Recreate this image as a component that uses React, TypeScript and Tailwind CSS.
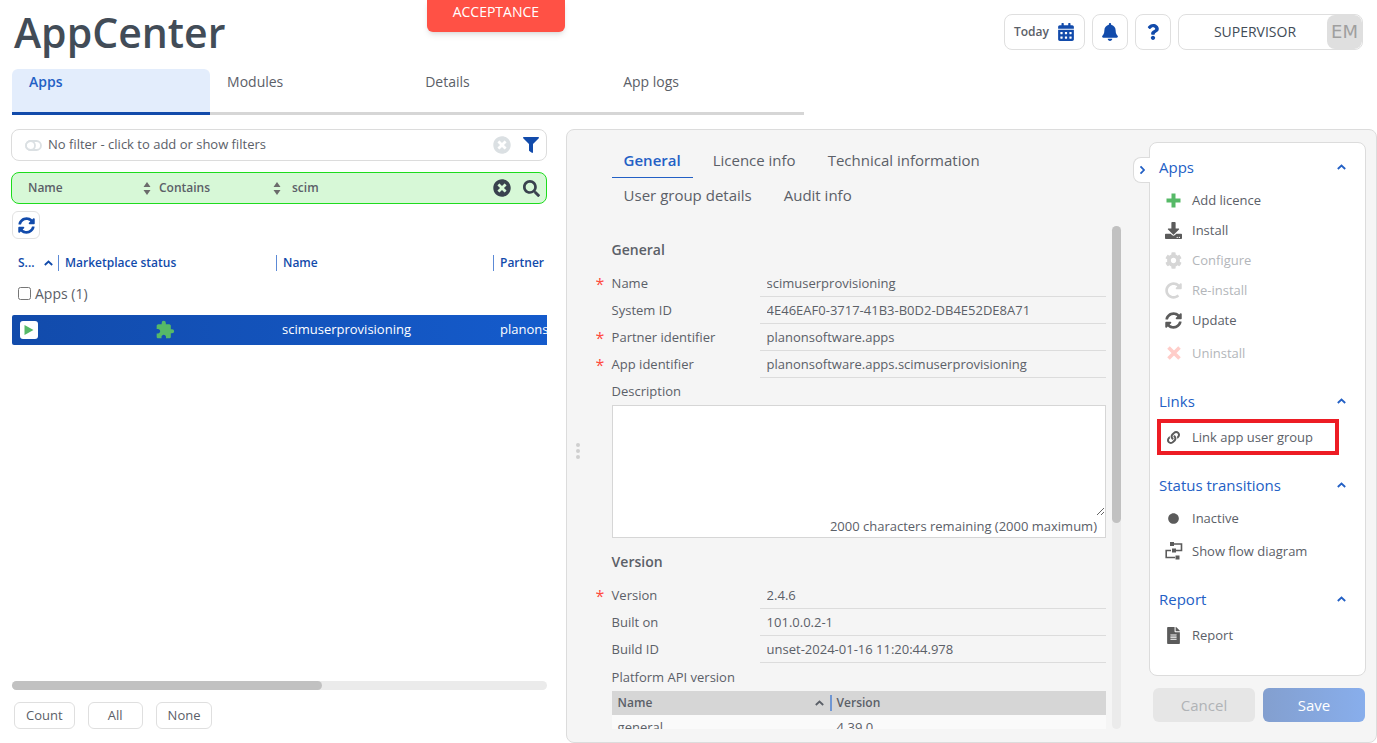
import React from 'react';
import clsx from 'clsx';
import type { IconType } from 'react-icons';
import {
    FaBell,
    FaCalendarAlt,
    FaCircle,
    FaCog,
    FaDownload,
    FaFileAlt,
    FaFilter,
    FaLink,
    FaQuestion,
    FaRedoAlt,
    FaSearch,
    FaSyncAlt,
    FaTimesCircle,
} from 'react-icons/fa';
import { MdExtension } from 'react-icons/md';

interface ActionItem {
    label: string;
    icon: React.ReactNode;
    disabled?: boolean;
    highlighted?: boolean;
}

interface ActionGroup {
    title: string;
    items: ActionItem[];
}

interface Field {
    id: string;
    label: string;
    value: string;
    required?: boolean;
}

const mainTabs = ['Apps', 'Modules', 'Details', 'App logs'];
const detailTabs = ['General', 'Licence info', 'Technical information', 'User group details', 'Audit info'];

const generalFields: Field[] = [
    { id: 'name', label: 'Name', value: 'scimuserprovisioning', required: true },
    { id: 'system-id', label: 'System ID', value: '4E46EAF0-3717-41B3-B0D2-DB4E52DE8A71' },
    { id: 'partner', label: 'Partner identifier', value: 'planonsoftware.apps', required: true },
    { id: 'app', label: 'App identifier', value: 'planonsoftware.apps.scimuserprovisioning', required: true },
];

const versionFields: Field[] = [
    { id: 'version', label: 'Version', value: '2.4.6', required: true },
    { id: 'built-on', label: 'Built on', value: '101.0.0.2-1' },
    { id: 'build-id', label: 'Build ID', value: 'unset-2024-01-16 11:20:44.978' },
];

function FlowIcon() {
    return (
        <svg width="18" height="18" viewBox="0 0 18 18" fill="none" stroke="#5b5b5b" strokeWidth="1.6">
            <path d="M9 2H16.5V8.5H11M6 8.5H1.2V15.5H10" />
            <path fill="#5b5b5b" stroke="none" d="M5 0h4v4H5zM7 6.5h4v4H7zM10.5 13.5h4v4h-4z" />
        </svg>
    );
}

function PlusIcon() {
    return (
        <svg width="15" height="15" viewBox="0 0 15 15" fill="none" stroke="#56b967" strokeWidth="4" strokeLinejoin="round">
            <path d="M7.5 .5v14M.5 7.5h14" />
        </svg>
    );
}

function CrossIcon() {
    return (
        <svg width="14" height="14" viewBox="0 0 14 14" fill="none" stroke="#ffcdc9" strokeWidth="3.6">
            <path d="M1.5 1.5l11 11M12.5 1.5l-11 11" />
        </svg>
    );
}

function Chevron({ className }: { className?: string }) {
    return (
        <svg width="9" height="6" viewBox="0 0 9 6" fill="none" stroke="currentColor" strokeWidth="1.8" className={className}>
            <path d="M.8 5 4.5 1.5 8.2 5" />
        </svg>
    );
}

function icon(Icon: IconType, size: number, className = 'text-[#5b5b5b]') {
    return <Icon size={size} className={className} />;
}

const actionGroups: ActionGroup[] = [
    {
        title: 'Apps',
        items: [
            { label: 'Add licence', icon: <PlusIcon /> },
            { label: 'Install', icon: icon(FaDownload, 17) },
            { label: 'Configure', icon: icon(FaCog, 17, 'text-[#d6d6d6]'), disabled: true },
            { label: 'Re-install', icon: icon(FaRedoAlt, 17, 'text-[#d6d6d6]'), disabled: true },
            { label: 'Update', icon: icon(FaSyncAlt, 17) },
            { label: 'Uninstall', icon: <CrossIcon />, disabled: true },
        ],
    },
    { title: 'Links', items: [{ label: 'Link app user group', icon: icon(FaLink, 13), highlighted: true }] },
    {
        title: 'Status transitions',
        items: [
            { label: 'Inactive', icon: icon(FaCircle, 11) },
            { label: 'Show flow diagram', icon: <FlowIcon /> },
        ],
    },
    { title: 'Report', items: [{ label: 'Report', icon: icon(FaFileAlt, 17) }] },
];

function FieldRow({ field }: { field: Field }) {
    return (
        <div className="flex h-[27px] items-center">
            <span className="w-4 text-base leading-4 text-[#ff4b3e]">{field.required && '*'}</span>
            <label htmlFor={field.id} className="w-[148px] shrink-0">{field.label}</label>
            <input
                id={field.id}
                readOnly
                defaultValue={field.value}
                className="h-full min-w-0 flex-1 border-b border-[#dcdcdc] bg-transparent px-[7px] outline-none"
            />
        </div>
    );
}

function SortSelect({ label, value, className }: { label: string; value: string; className: string }) {
    return (
        <div className={clsx('relative flex items-center', className)}>
            <select aria-label={label} defaultValue={value} className="w-full appearance-none bg-transparent outline-none">
                <option>{value}</option>
            </select>
            <svg width="8" height="13" viewBox="0 0 8 13" fill="#6b6b6b" className="pointer-events-none absolute right-0">
                <path d="M4 0 7.5 5H.5zM4 13 .5 8h7z" />
            </svg>
        </div>
    );
}

function Header() {
    const button = 'flex h-9 items-center justify-center rounded-lg border border-[#dfdfdf] text-[#124bab]';
    return (
        <header className="flex h-[69px] items-start justify-between pr-[14px]">
            <h1 className="pl-[3px] text-[41px] leading-[64px] font-semibold text-[#424c57]">AppCenter</h1>
            <div className="flex gap-[7px] pt-[14px]">
                <button className={clsx(button, 'w-[81px] gap-2')}>
                    <span className="text-xs font-semibold text-[#5b6068]">Today</span>
                    <FaCalendarAlt size={18} />
                </button>
                <button aria-label="Notifications" className={clsx(button, 'w-9')}><FaBell size={18} /></button>
                <button aria-label="Help" className={clsx(button, 'w-9')}><FaQuestion size={16} /></button>
                <button className={clsx(button, 'w-[185px] overflow-hidden')}>
                    <span className="flex-1 pl-1 text-sm text-[#424c57]">SUPERVISOR</span>
                    <span className="flex h-full w-[35px] items-center justify-center rounded-lg bg-[#dfdfdf] font-['DejaVu_Sans',sans-serif] text-lg text-[#9f9f9f]">EM</span>
                </button>
            </div>
        </header>
    );
}

function AppList() {
    const headText = 'flex h-4 items-center border-l border-[#5c8ad6] pl-[6px]';
    const footButton = 'h-[27px] rounded-md border border-[#dfdfdf] px-[11px] text-[13px]';
    return (
        <section className="flex min-h-0 min-w-0 flex-col">
            <div className="flex h-8 shrink-0 items-center rounded-lg border border-[#dcdcdc] pr-[6px] pl-[13px]">
                <svg width="17" height="11" viewBox="0 0 17 11" fill="none" stroke="#dbe0e3" strokeWidth="1.8">
                    <rect x="1" y="1" width="15" height="9" rx="4.5" />
                    <circle cx="5.5" cy="5.5" r="4.5" />
                </svg>
                <button className="flex-1 pl-[6px] text-left text-[13px] text-[#5b6068]">No filter - click to add or show filters</button>
                <FaTimesCircle size={18} className="text-[#dbe0e3]" />
                <FaFilter size={16} className="mr-px ml-3 text-[#124bab]" />
            </div>

            <div className="mt-[11px] flex h-8 shrink-0 items-center rounded-lg border border-[#1ddc1d] bg-[#d7f8d7] pr-[6px] pl-4 text-xs font-semibold text-[#5b6068]">
                <SortSelect label="Field" value="Name" className="w-[123px]" />
                <SortSelect label="Operator" value="Contains" className="ml-2 w-[122px]" />
                <input aria-label="Search value" defaultValue="scim" className="ml-[11px] min-w-0 flex-1 bg-transparent outline-none" />
                <button aria-label="Clear" className="text-[#39424e]"><FaTimesCircle size={18} /></button>
                <button aria-label="Search" className="ml-3 text-[#39424e]"><FaSearch size={17} /></button>
            </div>

            <button aria-label="Refresh" className="mt-[7px] ml-px flex size-7 shrink-0 items-center justify-center rounded-md border border-[#e2e2e2] text-[#124bab]">
                <FaSyncAlt size={17} />
            </button>

            <div className="mt-2 ml-px flex-1 overflow-hidden">
                <table className="w-[700px] table-fixed text-left text-[13px]">
                    <colgroup>
                        <col className="w-[46px]" />
                        <col className="w-[218px]" />
                        <col className="w-[217px]" />
                        <col />
                    </colgroup>
                    <thead className="text-xs text-[#124bab]">
                        <tr className="h-8">
                            <th className="font-semibold">
                                <span className="flex items-center justify-between pr-[5px] pl-[6px]">S...<Chevron /></span>
                            </th>
                            <th className="font-semibold"><span className={headText}>Marketplace status</span></th>
                            <th className="font-semibold"><span className={headText}>Name</span></th>
                            <th className="font-semibold"><span className={headText}>Partner</span></th>
                        </tr>
                    </thead>
                    <tbody>
                        <tr className="h-[29px]">
                            <td colSpan={4} className="text-sm">
                                <label className="flex items-center gap-1 pl-[6px]">
                                    <input type="checkbox" className="size-[13px]" />
                                    Apps (1)
                                </label>
                            </td>
                        </tr>
                        <tr className="h-[7px]" />
                        <tr className="h-[30px] bg-linear-to-r from-[#124bab] to-[#1560d6] text-white">
                            <td className="rounded-l-xs pl-2">
                                <span className="flex size-[18px] items-center justify-center rounded-[3px] bg-white">
                                    <svg width="10" height="10" viewBox="0 0 10 10" fill="#56b967"><path d="M.5 0 9.5 5 .5 10z" /></svg>
                                </span>
                            </td>
                            <td className="pr-1"><MdExtension size={20} className="mx-auto text-[#56b967]" /></td>
                            <td className="pl-[6px]">scimuserprovisioning</td>
                            <td className="pl-[7px]">planonsoftware.apps</td>
                        </tr>
                    </tbody>
                </table>
            </div>

            <div className="ml-px h-[9px] shrink-0 rounded-full bg-[#ebebeb]">
                <div className="h-full w-[58%] rounded-full bg-[#c1c1c1]" />
            </div>
            <div className="mt-3 mb-[14px] ml-[3px] flex gap-[13px]">
                <button className={footButton}>Count</button>
                <button className={clsx(footButton, 'w-[55px]')}>All</button>
                <button className={footButton}>None</button>
            </div>
        </section>
    );
}

function DetailForm() {
    return (
        <div className="flex min-h-0 min-w-0 flex-1 flex-col pt-[13px] pb-[13px]">
            <nav className="ml-4 flex shrink-0 flex-wrap gap-x-2 text-[15px]">
                {detailTabs.map((tab, i) => (
                    <button
                        key={tab}
                        className={clsx(
                            'h-[35px] border-b px-3',
                            i === 0 ? 'border-[#2360c5] font-semibold text-[#2360c5]' : 'border-transparent',
                        )}
                    >
                        {tab}
                    </button>
                ))}
            </nav>

            <div className="mt-[13px] flex min-h-0 flex-1 gap-[6px]">
                <div className="flex-1 overflow-hidden text-[13px]">
                    <h2 className="pt-2 pl-4 text-sm leading-8 font-semibold">General</h2>
                    <div className="mt-1">
                        {generalFields.map((field) => <FieldRow key={field.id} field={field} />)}
                    </div>
                    <label htmlFor="description" className="block pl-4 leading-[27px]">Description</label>
                    <div className="ml-4 border border-[#d6d6d6] bg-white">
                        <textarea id="description" className="block h-[110px] w-full resize-y outline-none" />
                        <p className="pr-2 text-right leading-[21px]">2000 characters remaining (2000 maximum)</p>
                    </div>
                    <h2 className="pt-2 pl-4 text-sm leading-8 font-semibold">Version</h2>
                    <div className="mt-1">
                        {versionFields.map((field) => <FieldRow key={field.id} field={field} />)}
                    </div>
                    <p className="pl-4 leading-7">Platform API version</p>
                    <div className="pl-4">
                        <table className="w-full table-fixed text-left">
                            <thead className="bg-[#d6d6d6] text-xs">
                                <tr className="h-6">
                                    <th className="w-[218px] pr-[6px] pl-[6px] font-semibold">
                                        <span className="flex items-center justify-between">Name<Chevron /></span>
                                    </th>
                                    <th className="font-semibold"><span className="flex h-4 items-center border-l-2 border-[#6f96d3] pl-[5px]">Version</span></th>
                                </tr>
                            </thead>
                            <tbody className="bg-[#fafafa]">
                                <tr className="h-[25px]">
                                    <td className="pl-[6px]">general</td>
                                    <td className="pl-[7px]">4.39.0</td>
                                </tr>
                            </tbody>
                        </table>
                    </div>
                </div>
                <div className="w-[9px] rounded-full bg-[#ebebeb]">
                    <div className="h-[59%] rounded-full bg-[#c1c1c1]" />
                </div>
            </div>
        </div>
    );
}

function ActionPanel() {
    return (
        <aside className="flex w-[217px] shrink-0 flex-col pt-3 pb-5">
            <div className="relative flex-1 rounded-lg border border-[#dcdcdc] bg-white px-[7px] pt-[6px]">
                <button
                    aria-label="Collapse panel"
                    className="absolute top-[14px] -left-[17px] flex h-[26px] w-[17px] items-center justify-center rounded-l-lg border border-r-0 border-[#dcdcdc] bg-white text-[#2360c5]"
                >
                    <Chevron className="rotate-90" />
                </button>
                {actionGroups.map((group) => (
                    <section key={group.title} className="mb-3">
                        <button className="flex h-9 w-full items-center justify-between pr-3 pl-[2px] text-[15px] text-[#2360c5]">
                            {group.title}
                            <Chevron />
                        </button>
                        <ul>
                            {group.items.map((item) => (
                                <li
                                    key={item.label}
                                    className={clsx(
                                        'mr-[19px] flex h-[30px] last:h-9',
                                        item.highlighted && 'outline-4 -outline-offset-4 outline-[#ed1c24]',
                                    )}
                                >
                                    <button disabled={item.disabled} className={clsx('flex w-full items-center text-[13px]', item.disabled && 'text-[#b3b6ba]')}>
                                        <span className="flex w-[33px] shrink-0 justify-center">{item.icon}</span>
                                        <span className="pt-[2px] pl-[2px]">{item.label}</span>
                                    </button>
                                </li>
                            ))}
                        </ul>
                    </section>
                ))}
            </div>
            <div className="mt-3 flex gap-2 pr-px pl-1 text-[15px]">
                <button disabled className="h-[34px] flex-1 rounded-md bg-[#e6e6e6] text-[#b0b3b6]">Cancel</button>
                <button disabled className="h-[34px] flex-1 rounded-md bg-linear-to-r from-[#839fcf] to-[#88aeec] font-medium text-white">Save</button>
            </div>
        </aside>
    );
}

export default function App() {
    return (
        <div className="relative flex h-screen flex-col overflow-hidden bg-white pl-[11px] font-['Open_Sans',sans-serif] text-[#5b6068]">
            <Header />

            {/* Environment banner */}
            <div className="absolute top-0 left-[31%] flex h-8 w-[138px] justify-center rounded-b-md bg-[#ff5145] pt-[2px] text-sm text-white shadow-md">
                ACCEPTANCE
            </div>

            <nav className="ml-px flex w-[58%] text-sm">
                {mainTabs.map((tab, i) => (
                    <button
                        key={tab}
                        className={clsx(
                            'flex h-[46px] flex-1 border-b-3 px-[17px] pt-[3px]',
                            i === 0 ? 'rounded-t-md border-[#124bab] bg-[#e3edfc] font-semibold text-[#2360c5]' : 'border-[#d6d6d6]',
                        )}
                    >
                        {tab}
                    </button>
                ))}
            </nav>

            <main className="mt-[14px] grid min-h-0 flex-1 grid-cols-[536fr_812fr] grid-rows-[minmax(0,1fr)] gap-[19px]">
                <AppList />
                <div className="flex min-h-0 min-w-0 gap-7 rounded-lg border border-[#dcdcdc] bg-[#f5f5f5] pr-[10px]">
                    <div className="flex min-w-0 flex-1">
                        <div className="flex w-[29px] shrink-0 flex-col items-center justify-center gap-[2px] pt-[30px] pr-[7px]">
                            <span className="size-1 rounded-full bg-[#cfcfcf]" />
                            <span className="size-1 rounded-full bg-[#cfcfcf]" />
                            <span className="size-1 rounded-full bg-[#cfcfcf]" />
                        </div>
                        <DetailForm />
                    </div>
                    <ActionPanel />
                </div>
            </main>
        </div>
    );
}
